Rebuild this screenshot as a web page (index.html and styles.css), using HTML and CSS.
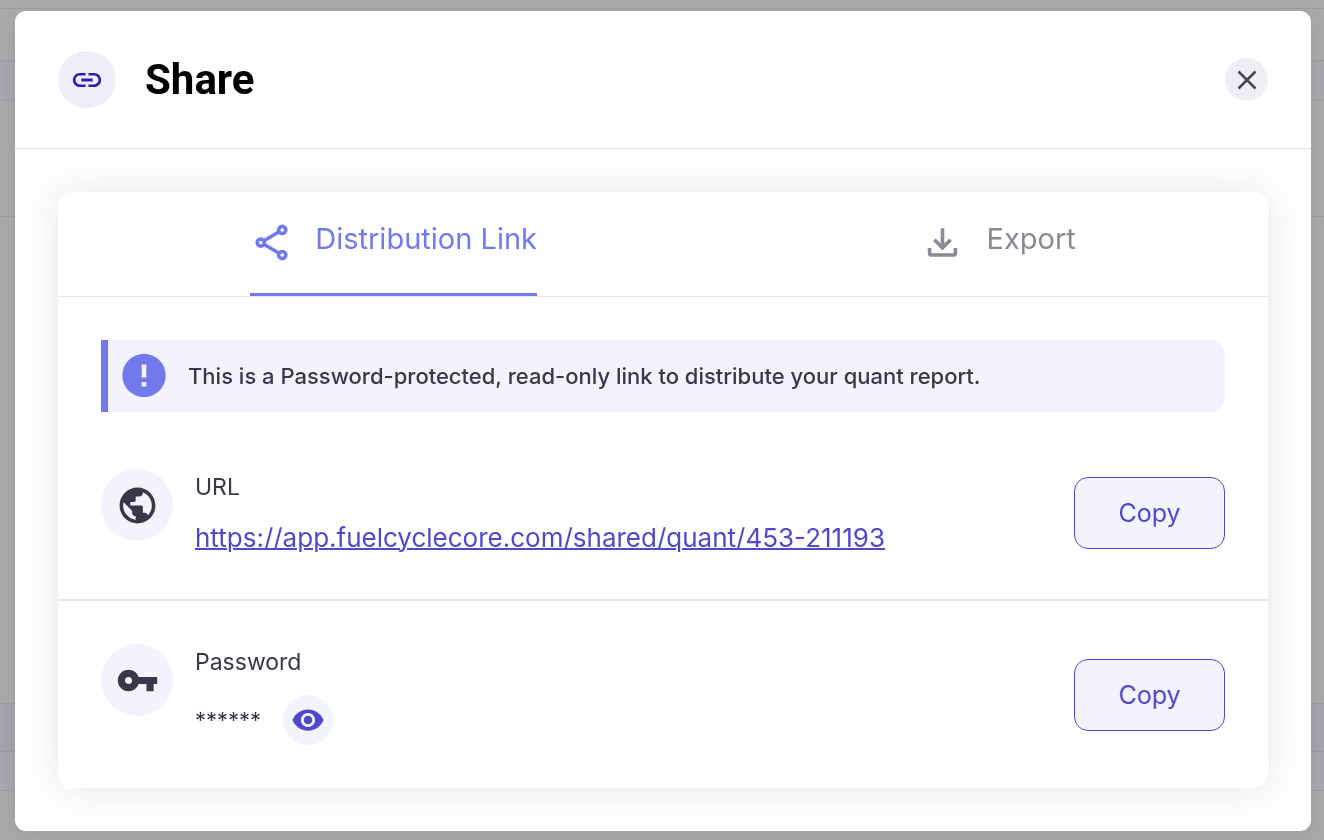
FILE: index.html
```html
<!DOCTYPE html>
<html lang="en">
<head>
    <meta charset="UTF-8">
    <meta name="viewport" content="width=device-width, initial-scale=1.0">
    <title>Share</title>
    <link rel="stylesheet" href="styles.css">
</head>
<body>
    <div class="page" aria-hidden="true">
        <div class="strip strip-top"></div>
        <div class="strip strip-nav"></div>
        <div class="strip strip-tools"></div>
        <div class="strip strip-head"></div>
        <div class="strip strip-main"></div>
        <div class="strip strip-active"></div>
        <div class="strip strip-row"></div>
        <div class="strip strip-foot"></div>
    </div>

    <div class="overlay">
        <div class="modal" role="dialog" aria-labelledby="share-title">
            <header class="modal-header">
                <span class="header-icon">
                    <svg viewBox="0 0 24 24"><path d="M3.9 12c0-1.71 1.39-3.1 3.1-3.1h4V7H7c-2.76 0-5 2.24-5 5s2.24 5 5 5h4v-1.9H7c-1.71 0-3.1-1.39-3.1-3.1zM8 13h8v-2H8v2zm9-6h-4v1.9h4c1.71 0 3.1 1.39 3.1 3.1s-1.39 3.1-3.1 3.1h-4V17h4c2.76 0 5-2.24 5-5s-2.24-5-5-5z"/></svg>
                </span>
                <h1 id="share-title">Share</h1>
                <button class="close" type="button" aria-label="Close">
                    <svg viewBox="0 0 20 20"><path d="M1.5 1.5l17 17M18.5 1.5l-17 17"/></svg>
                </button>
            </header>

            <div class="modal-body">
                <div class="card">
                    <div class="tabs" role="tablist">
                        <button class="tab active" type="button" role="tab" aria-selected="true">
                            <svg class="icon line" viewBox="0 0 24 24">
                                <path d="M7.7 11l8.6-5M7.7 13l8.6 5"/>
                                <circle cx="18" cy="5" r="2"/>
                                <circle cx="6" cy="12" r="2"/>
                                <circle cx="18" cy="19" r="2"/>
                            </svg>
                            <span>Distribution Link</span>
                        </button>
                        <button class="tab" type="button" role="tab" aria-selected="false">
                            <svg class="icon line" viewBox="0 0 24 24">
                                <path d="M12 4v10M7.5 10.5l4.5 4.5 4.5-4.5M4.8 15v3q0 1 1 1h12.4q1 0 1-1v-3"/>
                            </svg>
                            <span>Export</span>
                        </button>
                    </div>

                    <div class="notice">
                        <svg class="notice-icon" viewBox="0 0 44 44">
                            <circle cx="22" cy="21.5" r="21.7"/>
                            <path d="M19.7 10.5h4.6v13h-4.6zM19.7 27.9h4.6v4.6h-4.6z"/>
                        </svg>
                        <p>This is a Password-protected, read-only link to distribute your quant report.</p>
                    </div>

                    <div class="row">
                        <span class="row-icon">
                            <svg class="icon" viewBox="0 0 24 24"><path d="M12 2C6.48 2 2 6.48 2 12s4.48 10 10 10 10-4.48 10-10S17.52 2 12 2zm-1 17.93c-3.95-.49-7-3.85-7-7.93 0-.62.08-1.21.21-1.79L9 15v1c0 1.1.9 2 2 2v1.93zm6.9-2.54c-.26-.81-1-1.39-1.9-1.39h-1v-3c0-.55-.45-1-1-1H8v-2h2c.55 0 1-.45 1-1V7h2c1.1 0 2-.9 2-2v-.41c2.93 1.19 5 4.06 5 7.41 0 2.08-.8 3.97-2.1 5.39z"/></svg>
                        </span>
                        <div class="row-text">
                            <span class="label">URL</span>
                            <a class="url" href="https://app.fuelcyclecore.com/shared/quant/453-211193">https://app.fuelcyclecore.com/shared/quant/453-211193</a>
                        </div>
                        <button class="copy" type="button">Copy</button>
                    </div>

                    <div class="row">
                        <span class="row-icon">
                            <svg class="icon" viewBox="0 0 24 24"><path d="M12.65 10C11.83 7.67 9.61 6 7 6c-3.31 0-6 2.69-6 6s2.69 6 6 6c2.61 0 4.83-1.67 5.65-4H17v4h4v-4h2v-4H12.65zM7 14c-1.1 0-2-.9-2-2s.9-2 2-2 2 .9 2 2-.9 2-2 2z"/></svg>
                        </span>
                        <div class="row-text">
                            <span class="label">Password</span>
                            <div class="password">
                                <span>******</span>
                                <button class="reveal" type="button" aria-label="Show password">
                                    <svg viewBox="0 0 24 24"><path d="M12 4.5C7 4.5 2.73 7.61 1 12c1.73 4.39 6 7.5 11 7.5s9.27-3.11 11-7.5c-1.73-4.39-6-7.5-11-7.5zM12 17c-2.76 0-5-2.24-5-5s2.24-5 5-5 5 2.24 5 5-2.24 5-5 5zm0-8c-1.66 0-3 1.34-3 3s1.34 3 3 3 3-1.34 3-3-1.34-3-3-3z"/></svg>
                                </button>
                            </div>
                        </div>
                        <button class="copy" type="button">Copy</button>
                    </div>
                </div>
            </div>
        </div>
    </div>
</body>
</html>
```
FILE: styles.css
```css
*{
    padding: 0;
    margin: 0;
    box-sizing: border-box;
}

body{
    font-family: Inter, "Liberation Sans", sans-serif;
    font-optical-sizing: none;
    color: #3a374a;
    background: #ababac;
}

button{
    font: inherit;
    font-optical-sizing: none;
    border: none;
    background: none;
    cursor: pointer;
}

svg{
    display: block;
    fill: currentColor;
}

/* dimmed page behind the dialog */
.page{
    display: flex;
    flex-direction: column;
    min-height: 100vh;
}

.strip{
    border-bottom: 1px solid #9e9ea1;
}

.strip-top{
    height: 9px;
}

.strip-nav{
    height: 52px;
}

.strip-tools{
    height: 40px;
    background: #a9a8ad;
}

.strip-head{
    height: 116px;
}

.strip-main{
    flex: 1;
}

.strip-active{
    height: 48px;
    background: #a6a5ae;
}

.strip-row{
    height: 39px;
    background: #a9a8ad;
}

.strip-foot{
    height: 49px;
    border-bottom: none;
}

.overlay{
    position: fixed;
    inset: 0;
    padding: 11px 13px 9px 15px;
    overflow: auto;
}

.modal{
    background: #fff;
    border-radius: 11px;
    box-shadow: 0 6px 24px rgba(60, 55, 80, .12);
}

.modal-header{
    display: flex;
    align-items: center;
    padding: 40px 43px;
    border-bottom: 1px solid #e2e2ea;
}

.header-icon{
    display: flex;
    align-items: center;
    justify-content: center;
    width: 58px;
    height: 57px;
    border-radius: 50%;
    background: #eeeef8;
    color: #371ba6;
}

.header-icon svg{
    width: 34px;
    height: 34px;
}

.modal-header h1{
    flex: 1;
    margin-left: 29px;
    font-family: Roboto, sans-serif;
    font-size: 42px;
    line-height: 56px;
    font-weight: 700;
    color: #000;
}

.close{
    display: flex;
    align-items: center;
    justify-content: center;
    width: 43px;
    height: 43px;
    border-radius: 50%;
    background: #eeeef8;
    color: #4a4953;
}

.close svg{
    width: 20px;
    height: 20px;
    fill: none;
    stroke: currentColor;
    stroke-width: 2.6;
}

.modal-body{
    padding: 43px;
}

.card{
    background: #fff;
    border-radius: 14px;
    box-shadow: 0 0 43px rgba(50, 50, 71, .12);
}

.tabs{
    display: flex;
    justify-content: space-around;
    border-bottom: 1px solid #e8e8ee;
}

.tab{
    display: flex;
    align-items: flex-start;
    gap: 22px;
    padding: 29px 0 29px;
    border-bottom: 3px solid transparent;
    font-size: 29px;
    line-height: 36px;
    color: #8a8a96;
}

.tab.active{
    color: #7279ea;
    border-bottom-color: #7279ea;
}

.icon{
    width: 43px;
    height: 43px;
}

.line{
    fill: none;
    stroke: currentColor;
    stroke-width: 2;
}

.notice{
    display: flex;
    align-items: center;
    gap: 22px;
    min-height: 72px;
    margin: 43px 43px 14px;
    padding: 0 14px;
    border-left: 7px solid #7279ea;
    border-radius: 0 14px 14px 0;
    background: #f3f3fd;
    font-size: 22px;
    line-height: 29px;
    font-weight: 500;
}

.notice-icon{
    width: 44px;
    height: 44px;
    flex: none;
    overflow: visible;
}

.notice-icon circle{
    fill: #7279ea;
}

.notice-icon path{
    fill: #f3f3fd;
}

.row{
    display: flex;
    align-items: center;
    gap: 22px;
    padding: 43px;
}

.row + .row{
    border-top: 2px solid #e8e8ee;
}

.row-icon{
    display: flex;
    align-items: center;
    justify-content: center;
    align-self: flex-start;
    width: 72px;
    height: 72px;
    border-radius: 50%;
    background: #f3f3fd;
}

.row-text{
    display: flex;
    flex: 1;
    flex-direction: column;
    align-items: flex-start;
    gap: 15px;
    line-height: 36px;
}

.label{
    font-size: 23px;
}

.url{
    font-size: 26px;
    color: #5148c9;
    text-decoration-thickness: 2px;
}

.password{
    display: flex;
    align-items: center;
    gap: 22px;
    font-size: 22px;
}

.reveal{
    display: flex;
    align-items: center;
    justify-content: center;
    width: 50px;
    height: 50px;
    border-radius: 50%;
    background: #f3f3fd;
    color: #5148c9;
}

.reveal svg{
    width: 34px;
    height: 34px;
}

.copy{
    min-width: 151px;
    height: 72px;
    padding: 0 29px;
    border: 1px solid #5148c9;
    border-radius: 14px;
    background: #f3f3fd;
    font-size: 25px;
    color: #5148c9;
}
```
